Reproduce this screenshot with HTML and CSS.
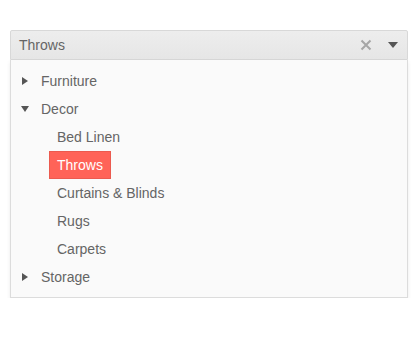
FILE: index.html
```html
<!DOCTYPE html>
<html>
<head>
<meta charset="utf-8">
<link rel="stylesheet" href="styles.css">
</head>
<body>
<div class="ddt">
  <div class="head">
    <span class="value">Throws</span>
    <span class="clear"><svg width="12" height="12" viewBox="0 0 12 12"><path d="M1.5 1.5L10.5 10.5M10.5 1.5L1.5 10.5" stroke="#a6a6a6" stroke-width="2"/></svg></span>
    <span class="arrow"><svg width="10" height="6" viewBox="0 0 10 6"><path d="M0 0H10L5 6Z" fill="#555"/></svg></span>
  </div>
  <div class="popup">
    <ul class="tree">
      <li class="item"><span class="tog"><svg width="6" height="8" viewBox="0 0 6 8"><path d="M0 0L6 4L0 8Z" fill="#555"/></svg></span><span class="lbl">Furniture</span></li>
      <li class="item"><span class="tog"><svg width="8" height="6" viewBox="0 0 8 6"><path d="M0 0H8L4 6Z" fill="#555"/></svg></span><span class="lbl">Decor</span></li>
      <li class="item child"><span class="tog"></span><span class="lbl">Bed Linen</span></li>
      <li class="item child"><span class="tog"></span><span class="lbl sel">Throws</span></li>
      <li class="item child"><span class="tog"></span><span class="lbl">Curtains &amp; Blinds</span></li>
      <li class="item child"><span class="tog"></span><span class="lbl">Rugs</span></li>
      <li class="item child"><span class="tog"></span><span class="lbl">Carpets</span></li>
      <li class="item"><span class="tog"><svg width="6" height="8" viewBox="0 0 6 8"><path d="M0 0L6 4L0 8Z" fill="#555"/></svg></span><span class="lbl">Storage</span></li>
    </ul>
  </div>
</div>
</body>
</html>
```
FILE: styles.css
```css
html, body {
  margin: 0;
  padding: 0;
  background: #fff;
}
body {
  padding: 30px 10px 0 10px;
  font-family: "Liberation Sans", Arial, sans-serif;
  font-size: 14px;
  color: #656565;
}
.ddt {
  width: 398px;
}
.head {
  height: 28px;
  border: 1px solid #d8d8d8;
  border-radius: 2px 2px 0 0;
  background: linear-gradient(#ededed, #e6e6e6);
  display: flex;
  align-items: center;
  padding: 0 0 0 8px;
}
.value {
  flex: 1;
  color: #656565;
}
.clear {
  width: 16px;
  display: flex;
  justify-content: center;
  margin-right: 5px;
}
.arrow {
  width: 28px;
  display: flex;
  justify-content: center;
}
.popup {
  border: 1px solid #dcdcdc;
  border-top: none;
  background: #fafafa;
  box-shadow: 0 2px 4px rgba(0,0,0,0.08);
  padding: 7px 0 6px 0;
}
.tree {
  list-style: none;
  margin: 0;
  padding: 0;
}
.item {
  display: flex;
  align-items: center;
  height: 28px;
  padding-left: 6px;
}
.item.child {
  padding-left: 22px;
}
.tog {
  width: 16px;
  display: flex;
  justify-content: center;
  align-items: center;
}
.lbl {
  padding: 3px 7px;
  line-height: 20px;
  border: 1px solid transparent;
}
.sel {
  background: #ff6358;
  border-color: #eb5a4f;
  color: #fff;
}
```
